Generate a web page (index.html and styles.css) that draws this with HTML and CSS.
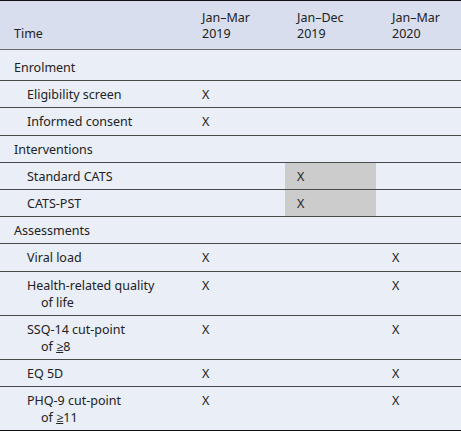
FILE: index.html
```html
<!DOCTYPE html>
<html>
<head>
<meta charset="utf-8">
<link rel="stylesheet" href="styles.css">
</head>
<body>
<table class="sched">
  <thead>
    <tr>
      <th class="c1">Time</th>
      <th class="c2">Jan–Mar<br>2019</th>
      <th class="c3">Jan–Dec<br>2019</th>
      <th class="c4">Jan–Mar<br>2020</th>
    </tr>
  </thead>
  <tbody>
    <tr class="first">
      <td class="c1 cat">Enrolment</td><td class="c2"></td><td class="c3"></td><td class="c4"></td>
    </tr>
    <tr>
      <td class="c1 sub">Eligibility screen</td><td class="c2">X</td><td class="c3"></td><td class="c4"></td>
    </tr>
    <tr>
      <td class="c1 sub">Informed consent</td><td class="c2">X</td><td class="c3"></td><td class="c4"></td>
    </tr>
    <tr>
      <td class="c1 cat">Interventions</td><td class="c2"></td><td class="c3"></td><td class="c4"></td>
    </tr>
    <tr>
      <td class="c1 sub">Standard CATS</td><td class="c2"></td><td class="c3 shade">X</td><td class="c4"></td>
    </tr>
    <tr>
      <td class="c1 sub">CATS-PST</td><td class="c2"></td><td class="c3 shade">X</td><td class="c4"></td>
    </tr>
    <tr>
      <td class="c1 cat">Assessments</td><td class="c2"></td><td class="c3"></td><td class="c4"></td>
    </tr>
    <tr>
      <td class="c1 sub">Viral load</td><td class="c2">X</td><td class="c3"></td><td class="c4">X</td>
    </tr>
    <tr>
      <td class="c1 sub">Health-related quality<br>of life</td><td class="c2">X</td><td class="c3"></td><td class="c4">X</td>
    </tr>
    <tr>
      <td class="c1 sub">SSQ-14 cut-point<br>of <span class="ge">≥</span>8</td><td class="c2">X</td><td class="c3"></td><td class="c4">X</td>
    </tr>
    <tr>
      <td class="c1 sub">EQ 5D</td><td class="c2">X</td><td class="c3"></td><td class="c4">X</td>
    </tr>
    <tr class="last">
      <td class="c1 sub">PHQ-9 cut-point<br>of <span class="ge">≥</span>11</td><td class="c2">X</td><td class="c3"></td><td class="c4">X</td>
    </tr>
  </tbody>
</table>
</body>
</html>
```
FILE: styles.css
```css
html, body {
  margin: 0;
  padding: 0;
  background: #ffffff;
}
.sched {
  width: 461px;
  border-collapse: collapse;
  table-layout: fixed;
  font-family: "Noto Sans", "Open Sans", sans-serif;
  font-size: 12.5px;
  color: #222222;
  background: #e9eef7;
  border-top: 1px solid #111111;
  border-bottom: 1px solid #111111;
}
.sched th, .sched td {
  text-align: left;
  font-weight: normal;
  padding: 5px 0 4.2px 12px;
  line-height: 17px;
  vertical-align: top;
  border-bottom: 1px solid #4a4a4a;
}
.sched thead th {
  background: #d8deee;
  vertical-align: bottom;
  line-height: 16px;
  padding-top: 9px;
  padding-bottom: 7px;
  border-bottom: 1px solid #6a6a6a;
}
.sched .c1 { width: 176px; padding-left: 14px; }
.sched .c2 { width: 83px; }
.sched .c3 { width: 79px; }
.sched .c4 { width: 69px; padding-left: 16px; }
.sched .cat { padding-left: 14px; }
.sched .sub { padding-left: 41px; text-indent: -14px; }
.sched tr.first td { padding-top: 9px; }
.sched tr.last td { border-bottom: none; }
.sched td.shade { background: #cccccc; }
.ge { text-decoration: underline; text-underline-offset: 1px; }
```
